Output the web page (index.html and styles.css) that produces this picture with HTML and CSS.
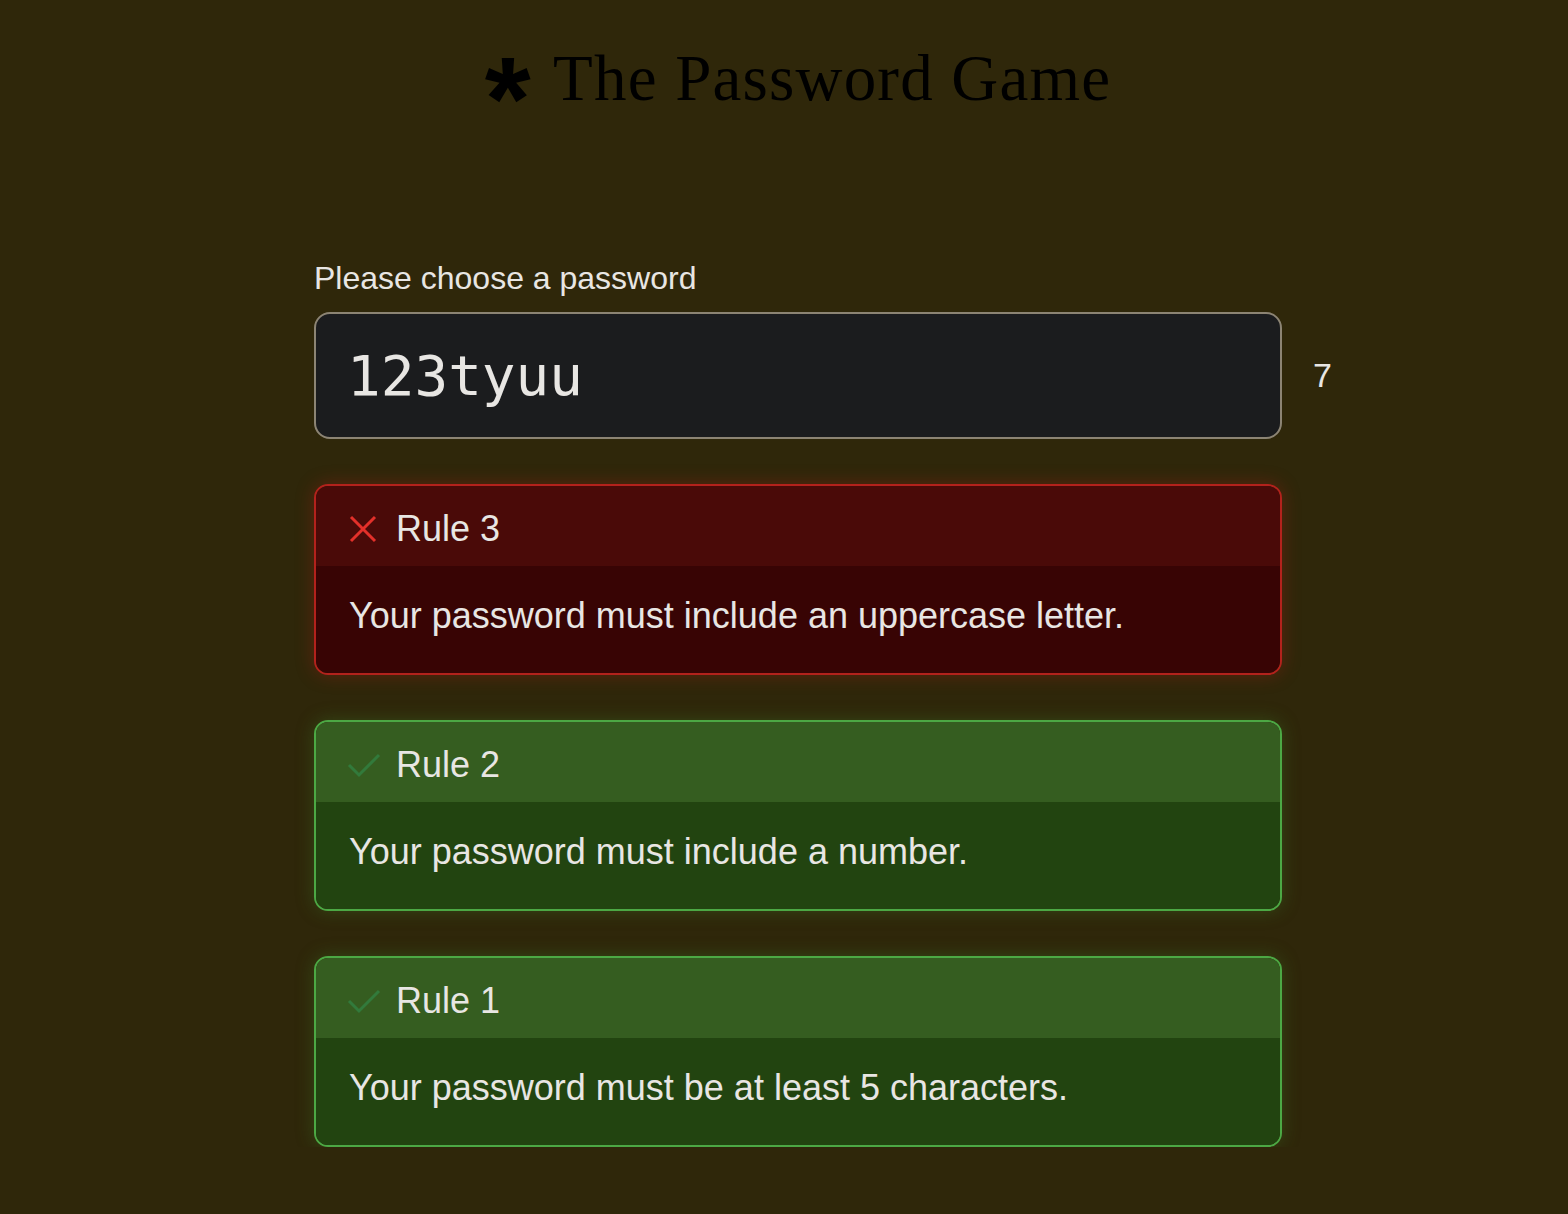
FILE: index.html
```html
<!DOCTYPE html>
<html>

<head>
    <title>The Password Game</title>
    <link rel="stylesheet" href="styles.css">
</head>

<body>
    <h1 class="title"><span class="star">*</span> The Password Game</h1>

    <div class="game">
        <p class="label">Please choose a password</p>
        <div class="input-row">
            <div class="password-box">123tyuu</div>
            <span class="count">7</span>
        </div>

        <div class="rule rule-bad">
            <div class="rule-top">
                <span class="icon">
                    <svg width="28" height="28" viewBox="0 0 28 28">
                        <path d="M2 2 L26 26 M26 2 L2 26" stroke="#e3302a" stroke-width="3" fill="none" />
                    </svg>
                </span>
                <span>Rule 3</span>
            </div>
            <div class="rule-desc">Your password must include an uppercase letter.</div>
        </div>

        <div class="rule rule-good">
            <div class="rule-top">
                <span class="icon check">
                    <svg width="34" height="28" viewBox="0 0 34 28">
                        <path d="M2 14 L12 24 L32 4" stroke="#327a3b" stroke-width="3" fill="none" />
                    </svg>
                </span>
                <span>Rule 2</span>
            </div>
            <div class="rule-desc">Your password must include a number.</div>
        </div>

        <div class="rule rule-good">
            <div class="rule-top">
                <span class="icon check">
                    <svg width="34" height="28" viewBox="0 0 34 28">
                        <path d="M2 14 L12 24 L32 4" stroke="#327a3b" stroke-width="3" fill="none" />
                    </svg>
                </span>
                <span>Rule 1</span>
            </div>
            <div class="rule-desc">Your password must be at least 5 characters.</div>
        </div>
    </div>
</body>

</html>
```

FILE: styles.css
```css
body {
    margin: 0;
    background-color: #2f270a;
    font-family: "Liberation Sans", Arial, sans-serif;
    color: #e8e6e3;
}

.title {
    margin: 0;
    padding-top: 38px;
    padding-left: 28px;
    text-align: center;
    font-family: "Liberation Serif", "Times New Roman", serif;
    font-weight: normal;
    font-size: 65px;
    letter-spacing: 1.2px;
    line-height: 80px;
    color: #000;
}

.star {
    font-family: "Liberation Sans", Arial, sans-serif;
    font-weight: bold;
    font-size: 118px;
    line-height: 0;
    position: relative;
    top: 40px;
    margin-right: 5px;
}

.game {
    width: 968px;
    margin: 0 auto;
    padding-left: 28px;
    padding-top: 142px;
}

.label {
    margin: 0 0 16px 0;
    font-size: 32px;
    line-height: 36px;
}

.input-row {
    display: flex;
    align-items: center;
    width: 1060px;
}

.password-box {
    width: 968px;
    height: 127px;
    box-sizing: border-box;
    border: 2px solid #8c8474;
    border-radius: 16px;
    background-color: #1b1c1e;
    padding: 0 31px;
    display: flex;
    align-items: center;
    font-family: "DejaVu Sans Mono", monospace;
    font-size: 56px;
    color: #e8e6e3;
}

.count {
    margin-left: 31px;
    font-size: 34px;
}

.rule {
    margin-top: 45px;
    border: 2px solid;
    border-radius: 14px;
    overflow: hidden;
}

.rule-top {
    height: 80px;
    box-sizing: border-box;
    padding-top: 6px;
    display: flex;
    align-items: center;
    padding-left: 33px;
    font-size: 36px;
}

.icon {
    display: flex;
    width: 47px;
}

.icon.check {
    margin-left: -2px;
    width: 49px;
}

.rule-desc {
    height: 107px;
    box-sizing: border-box;
    padding-bottom: 7px;
    display: flex;
    align-items: center;
    padding-left: 33px;
    font-size: 36px;
}

.rule-bad {
    border-color: #b3221c;
    box-shadow: 0 0 18px rgba(150, 30, 20, 0.45);
}

.rule-bad .rule-top {
    background-color: #4a0a08;
}

.rule-bad .rule-desc {
    background-color: #380404;
}

.rule-good {
    border-color: #4ca844;
    box-shadow: 0 0 18px rgba(60, 120, 40, 0.4);
}

.rule-good .rule-top {
    background-color: #355d20;
}

.rule-good .rule-desc {
    background-color: #224410;
}
```
